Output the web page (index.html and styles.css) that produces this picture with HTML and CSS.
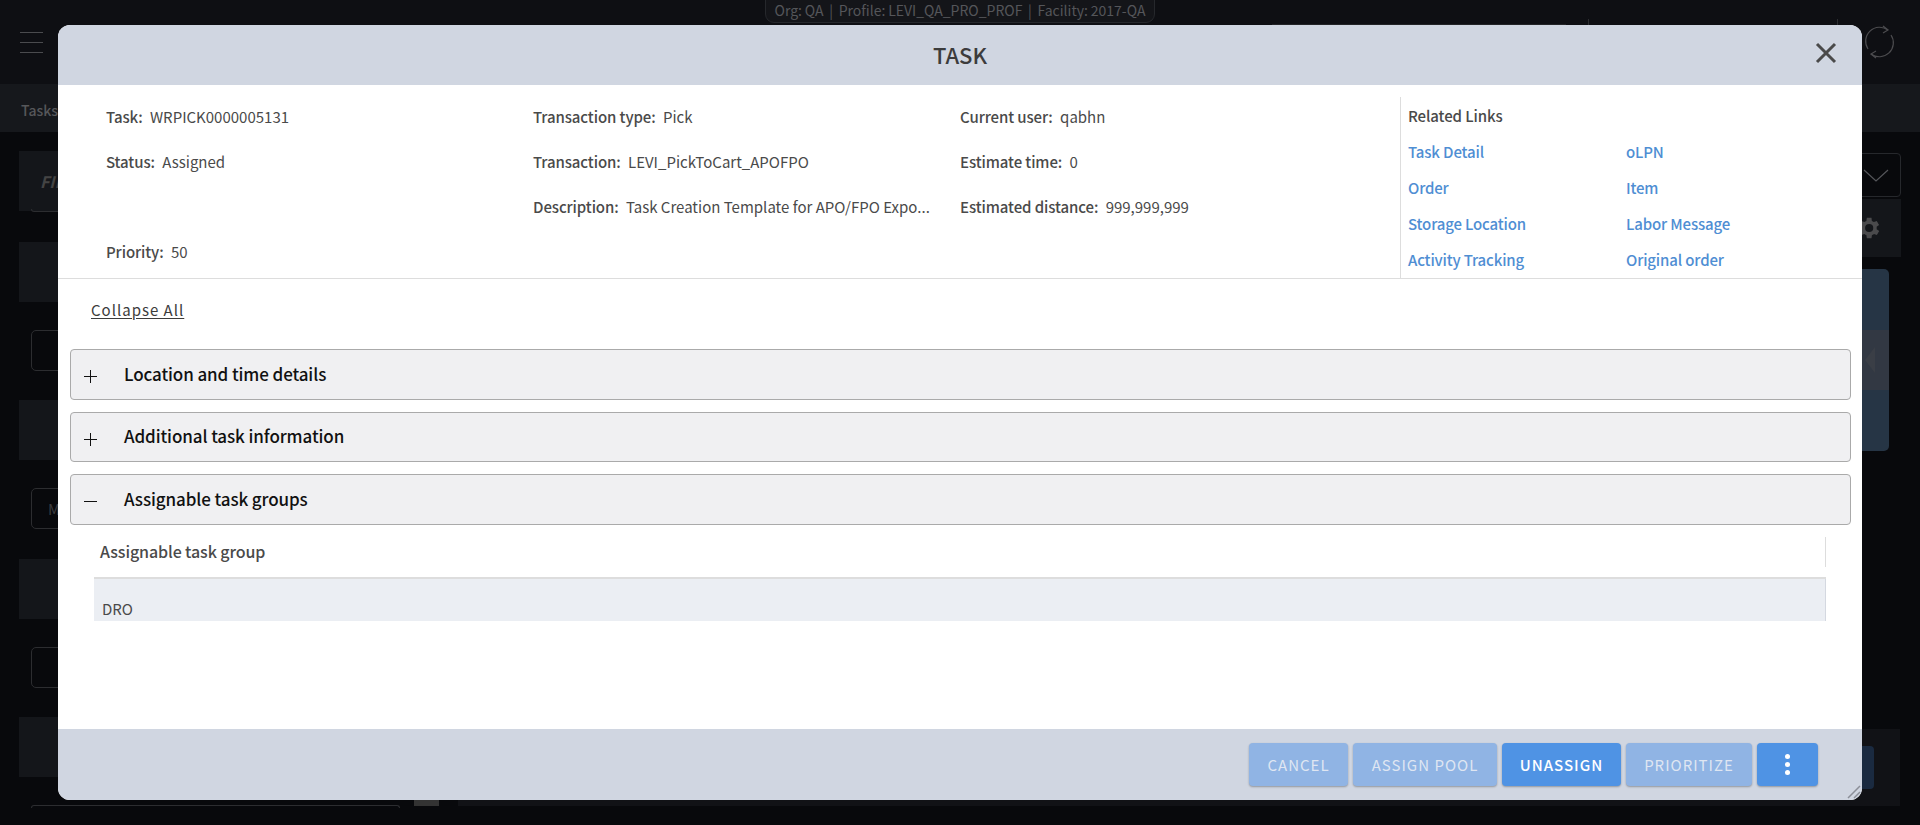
FILE: index.html

```html
<!DOCTYPE html>
<html lang="en">
<head>
    <meta charset="UTF-8">
    <title>Task</title>
    <link rel="stylesheet" href="styles.css">
</head>
<body>
    <!-- dimmed page behind the dialog -->
    <div class="page">
        <header class="topbar">
            <div class="org-pill">Org: QA &nbsp;|&nbsp; Profile: LEVI_QA_PRO_PROF &nbsp;|&nbsp; Facility: 2017-QA</div>
            <div class="hamburger"><span></span><span></span><span></span></div>
            <div class="top-field"></div>
            <div class="top-sep top-sep-a"></div>
            <div class="top-sep top-sep-b"></div>
            <svg class="refresh" width="34" height="36" viewBox="0 0 34 36" fill="none" stroke="#4c4c4f" stroke-width="1.2">
                <path d="M6 25A14 14 0 0 1 26 6"/>
                <path d="M21 2l5 4-5 3"/>
                <path d="M29 11A14 14 0 0 1 9 30"/>
                <path d="M14 34l-5-4 5-3"/>
            </svg>
        </header>
        <div class="crumbs">Tasks</div>
        <div class="workspace">
            <aside class="filters">
                <div class="filter-title">FILTERS</div>
                <div class="filter-box filter-box-first"></div>
                <div class="filter-head"></div>
                <div class="filter-box"></div>
                <div class="filter-head"></div>
                <div class="filter-box">M</div>
                <div class="filter-head"></div>
                <div class="filter-box"></div>
                <div class="filter-head"></div>
                <div class="filter-box filter-box-last"></div>
            </aside>
            <div class="right-rail">
                <div class="rail-select">
                    <svg width="26" height="14" viewBox="0 0 26 14" fill="none" stroke="#55565a" stroke-width="1.2"><path d="M1 1l12 11L25 1"/></svg>
                </div>
                <div class="rail-gear">
                    <svg width="28" height="28" viewBox="0 0 24 24" fill="#4a4a4c"><path d="M19.4 13a7.5 7.5 0 0 0 0-2l2.100-1.600-2-3.500-2.500 1a7.500 7.500 0 0 0-1.700-1L15 3.200h-4l-.4 2.700a7.500 7.500 0 0 0-1.700 1l-2.500-1-2 3.500L6.500 11a7.500 7.500 0 0 0 0 2l-2.100 1.600 2 3.500 2.500-1a7.500 7.500 0 0 0 1.700 1l.4 2.700h4l.4-2.700a7.500 7.500 0 0 0 1.700-1l2.500 1 2-3.500zM13 15.500a3.500 3.500 0 1 1 0-7 3.500 3.500 0 0 1 0 7z"/></svg>
                </div>
                <div class="rail-card">
                    <div class="rail-toggle"><span class="rail-arrow"></span></div>
                </div>
            </div>
        </div>
        <div class="page-chip"></div>
        <div class="page-foot"><span class="foot-btn"></span></div>
    </div>

    <div class="modal">
        <div class="modal-head">
            <h1 class="modal-title">TASK</h1>
            <svg class="modal-close" width="24" height="24" viewBox="0 0 24 24" stroke="#4a4a4a" stroke-width="3" fill="none"><path d="M3 3l18 18M21 3L3 21"/></svg>
        </div>

        <div class="summary">
            <div class="facts">
                <div class="fact"><b>Task:</b> WRPICK0000005131</div>
                <div class="fact"><b>Transaction type:</b> Pick</div>
                <div class="fact"><b>Current user:</b> qabhn</div>
                <div class="fact"><b>Status:</b> Assigned</div>
                <div class="fact"><b>Transaction:</b> LEVI_PickToCart_APOFPO</div>
                <div class="fact"><b>Estimate time:</b> 0</div>
                <div class="fact"></div>
                <div class="fact"><b>Description:</b> Task Creation Template for APO/FPO Expo...</div>
                <div class="fact"><b>Estimated distance:</b> 999,999,999</div>
                <div class="fact"><b>Priority:</b> 50</div>
            </div>
            <div class="links">
                <div class="links-title">Related Links</div>
                <div class="links-grid">
                    <a>Task Detail</a><a>oLPN</a>
                    <a>Order</a><a>Item</a>
                    <a>Storage Location</a><a>Labor Message</a>
                    <a>Activity Tracking</a><a>Original order</a>
                </div>
            </div>
        </div>

        <div class="modal-body">
            <a class="collapse-all">Collapse All</a>
            <div class="section">
                <svg class="section-icon" width="13" height="13" viewBox="0 0 13 13" stroke="#111" stroke-width="1"><path d="M0 6.500h13M6.500 0v13"/></svg>
                Location and time details
            </div>
            <div class="section">
                <svg class="section-icon" width="13" height="13" viewBox="0 0 13 13" stroke="#111" stroke-width="1"><path d="M0 6.500h13M6.500 0v13"/></svg>
                Additional task information
            </div>
            <div class="section section-open">
                <svg class="section-icon" width="13" height="13" viewBox="0 0 13 13" stroke="#111" stroke-width="1"><path d="M0 6.500h13"/></svg>
                Assignable task groups
            </div>
            <div class="grid-head"><span>Assignable task group</span></div>
            <div class="grid-row">DRO</div>
        </div>

        <div class="modal-foot">
            <button class="btn btn-off btn-cancel">CANCEL</button>
            <button class="btn btn-off btn-pool">ASSIGN POOL</button>
            <button class="btn btn-unassign">UNASSIGN</button>
            <button class="btn btn-off btn-prio">PRIORITIZE</button>
            <button class="btn btn-more"><i></i><i></i><i></i></button>
            <svg class="grip" width="14" height="14" viewBox="0 0 14 14" stroke="#8b8f98" stroke-width="1.500"><path d="M1 13L13 1M7 13l6-6"/></svg>
        </div>
    </div>
</body>
</html>
```

FILE: styles.css

```css
* {
    box-sizing: border-box;
}

html, body {
    margin: 0;
    height: 100%;
    overflow: hidden;
}

body {
    font-family: "Noto Sans CJK JP", "Noto Sans", sans-serif;
    font-size: 15px;
    background: #08090c;
    color: #4a4a4a;
}

.page {
    height: 825px;
    display: flex;
    flex-direction: column;
}

/* page behind */
.topbar {
    height: 84px;
    flex: none;
    background: #0e0f13;
    position: relative;
    padding: 32px 0 0 20px;
}

.org-pill {
    position: absolute;
    top: -1px;
    left: 765px;
    width: 390px;
    height: 24px;
    border: 1px solid #26282c;
    border-radius: 0 0 9px 9px;
    background: #141519;
    color: #55565a;
    font-size: 14px;
    line-height: 21px;
    text-align: center;
    white-space: nowrap;
    word-spacing: -0.3px;
}

.hamburger {
    width: 23px;
    display: flex;
    flex-direction: column;
    gap: 9px;
}

.hamburger span {
    height: 1px;
    background: #4a4b4e;
}

.top-field {
    position: absolute;
    left: 1272px;
    top: 24px;
    width: 294px;
    height: 1px;
    background: #232427;
}

.top-sep {
    position: absolute;
    top: 19px;
    height: 8px;
    border-left: 1px solid #2c2d30;
}

.top-sep-a { left: 1588px; }
.top-sep-b { left: 1837px; }

.refresh {
    position: absolute;
    left: 1862px;
    top: 24px;
}

.crumbs {
    height: 48px;
    flex: none;
    background: #16181c;
    color: #56575a;
    font-weight: 500;
    font-size: 14px;
    line-height: 52px;
    padding-left: 21px;
}

.workspace {
    flex: none;
    height: 597px;
    display: flex;
    justify-content: space-between;
    padding: 19px 19px 0 19px;
}

.filters {
    width: 381px;
}

.filter-title {
    height: 60px;
    background: #14161a;
    color: #444;
    font-style: italic;
    font-weight: 700;
    font-size: 16px;
    line-height: 60px;
    padding-left: 21px;
}

.filter-head {
    height: 60px;
    margin-bottom: 28px;
    background: #14161a;
}

.filter-box {
    height: 41px;
    margin: 0 0 29.5px 12px;
    border: 1px solid #2c2d30;
    border-radius: 5px;
    color: #3c3d40;
    font-size: 15px;
    line-height: 39px;
    padding-left: 16px;
}

.filter-box-first {
    height: 3px;
    margin-top: -2px;
    border-top: 0;
    border-radius: 0 0 5px 5px;
}

.filter-box-last {
    height: 3px;
    margin-bottom: 0;
    border-bottom: 0;
    border-radius: 5px 5px 0 0;
}

.right-rail {
    width: 70px;
    padding-top: 2px;
}

.rail-select {
    width: 70px;
    height: 44px;
    border: 1px solid #26282c;
    border-radius: 4px;
    display: flex;
    align-items: center;
    justify-content: flex-end;
    padding: 2px 11px 0 0;
}

.rail-gear {
    height: 58px;
    margin-top: 2px;
    background: #14161a;
    display: flex;
    align-items: center;
    justify-content: flex-end;
    padding-right: 19px;
}

.rail-card {
    width: 58px;
    height: 182px;
    margin-top: 12px;
    background: #263545;
    border-radius: 0 5px 5px 0;
    padding-top: 61px;
}

.rail-toggle {
    height: 60px;
    background: #323843;
    display: flex;
    align-items: center;
    justify-content: flex-end;
    padding-right: 14px;
}

.rail-arrow {
    width: 0;
    height: 0;
    border: 13px solid transparent;
    border-left: 0;
    border-right: 10px solid #3a3e46;
}

.page-chip {
    position: absolute;
    top: 790px;
    left: 414px;
    width: 25px;
    height: 16px;
    background: #333;
}

.page-foot {
    position: absolute;
    top: 729px;
    left: 458px;
    width: 1442px;
    height: 77px;
    background: #111216;
}

.foot-btn {
    display: block;
    width: 74px;
    height: 43px;
    margin: 17px 26px 0 auto;
    background: #1a2a40;
    border-radius: 4px;
}

/* dialog */
.modal {
    position: absolute;
    top: 25px;
    left: 58px;
    width: 1804px;
    height: 775px;
    background: #fff;
    border-radius: 12px;
    overflow: hidden;
    display: flex;
    flex-direction: column;
}

.modal-head {
    height: 60px;
    flex: none;
    background: #d0d6e1;
    display: flex;
    align-items: center;
    justify-content: center;
    position: relative;
}

.modal-title {
    margin: 0 0 3px;
    font-size: 22px;
    font-weight: 500;
    color: #3c3c3c;
}

.modal-close {
    position: absolute;
    right: 24px;
    top: 16px;
}

.summary {
    height: 194px;
    flex: none;
    display: flex;
    border-bottom: 1px solid #ddd;
    padding: 12px 0 0 48px;
}

.facts {
    width: 1294px;
    display: grid;
    grid-template-columns: 427px 427px 427px;
    grid-auto-rows: 45px;
}

.fact {
    line-height: 20px;
    padding-top: 10px;
    white-space: nowrap;
}

.fact b {
    font-weight: 500;
    margin-right: 4px;
    letter-spacing: -0.1px;
}

.links {
    flex: 1;
    border-left: 1px solid #ddd;
    padding: 9px 0 0 7px;
}

.links-title {
    font-weight: 500;
    line-height: 20px;
    letter-spacing: -0.1px;
}

.links-grid {
    display: grid;
    grid-template-columns: 218px 218px;
    grid-auto-rows: 36px;
    padding-top: 8px;
}

.links-grid a {
    color: #4f8ed3;
    font-weight: 500;
    line-height: 36px;
    letter-spacing: -0.15px;
}

.modal-body {
    flex: 1;
    padding: 0 11px 0 12px;
}

.collapse-all {
    display: block;
    margin: 19px 0 0 21px;
    height: 24px;
    line-height: 24px;
    letter-spacing: 1px;
    text-decoration: underline;
    text-underline-offset: 2px;
    color: #3c3c3c;
}

.section {
    height: 50.5px;
    margin-bottom: 12px;
    background: #f0f0f2;
    border: 1px solid #aaa;
    border-radius: 4px;
    font-size: 17px;
    font-weight: 500;
    letter-spacing: -0.1px;
    color: #111;
    display: flex;
    align-items: center;
    padding-bottom: 2px;
}

.section:first-of-type {
    margin-top: 27px;
}

.section-open {
    margin-bottom: 0;
}

.section-icon {
    margin: 7px 27px 0 13px;
}

.grid-head {
    height: 54px;
    margin: 0 25px 0 24px;
    border-bottom: 2px solid #ddd;
    display: flex;
    align-items: center;
    padding-left: 6px;
    position: relative;
    font-size: 16px;
    font-weight: 500;
    letter-spacing: -0.1px;
    color: #4a4a4a;
}

.grid-head::after {
    content: "";
    position: absolute;
    right: 0;
    top: 12px;
    height: 30px;
    border-right: 1px solid #ddd;
}

.grid-row {
    height: 42px;
    margin: 0 25px 0 24px;
    background: #ebeef3;
    border-right: 1px solid #d4d8e0;
    padding: 20px 0 0 8px;
    line-height: 20px;
}

.modal-foot {
    height: 71px;
    flex: none;
    background: #d0d6e1;
    display: flex;
    justify-content: flex-end;
    gap: 5px;
    padding: 14px 44px 0 0;
    position: relative;
}

.btn {
    height: 43px;
    border: 0;
    border-radius: 4px;
    background: #4f93e4;
    color: #fff;
    font-family: inherit;
    font-size: 15px;
    font-weight: 500;
    letter-spacing: 1px;
    padding-bottom: 2px;
    box-shadow: 0 1px 2px rgba(0, 0, 0, 0.3);
}

.btn-off {
    background: #90b4e4;
    color: #dfe6f2;
    font-weight: 400;
}

.btn-cancel { width: 99px; }
.btn-pool { width: 144px; }
.btn-unassign { width: 119px; }
.btn-prio { width: 126px; }

.btn-more {
    width: 61px;
    display: flex;
    flex-direction: column;
    align-items: center;
    justify-content: center;
    gap: 3px;
}

.btn-more i {
    width: 5px;
    height: 5px;
    border-radius: 50%;
    background: #fff;
}

.grip {
    position: absolute;
    right: 1px;
    bottom: 1px;
}
```
